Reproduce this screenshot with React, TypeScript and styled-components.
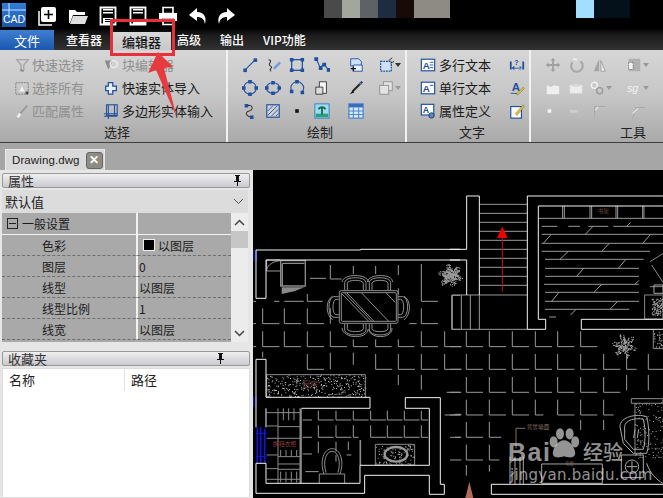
import React, { useMemo } from "react";
import styled, { createGlobalStyle } from "styled-components";

const Global = createGlobalStyle`
  html, body { margin: 0; padding: 0; background: #000; }
  body { font-family: "Noto Sans CJK SC", "Liberation Sans", sans-serif; }
`;

const Page = styled.div`
  position: relative; width: 663px; height: 498px; overflow: hidden;
  display: flex; flex-direction: column; background: #a8a8a8;
`;
const TopBar = styled.div`
  height: 29px; flex: none; background: #000; display: flex; align-items: flex-start; position: relative;
`;
const Logo = styled.div`
  width: 24px; height: 24px; margin: 3px 0 0 2px; flex: none; position: relative;
  background: linear-gradient(#2f7fd8, #1c55ae); color: #fff; font: 10.5px/1 "Liberation Sans", sans-serif;
  display: flex; align-items: flex-end; justify-content: center; padding-bottom: 3px; box-sizing: border-box;
`;
const LogoGrid = styled.svg`position: absolute; left: 0; top: 0; width: 24px; height: 24px;`;
const QuickIcons = styled.div`
  display: flex; margin-left: 12px; height: 29px; align-items: center; flex: none; padding-top: 2px; box-sizing: border-box;
`;
const QuickBtn = styled.svg`
  width: 20px; height: 20px; flex: none; margin-right: ${p => p.$mr ?? 10}px;
`;
const Mosaic = styled.div`
  position: absolute; top: 0; height: 18px; left: ${p => p.$x}px; width: ${p => p.$w}px; background: ${p => p.$c};
`;
const MenuBar = styled.div`
  height: 21px; flex: none; display: flex; align-items: stretch;
  background: linear-gradient(#040404, #1c1c1c 30%, #323232);
`;
const FileTab = styled.div`
  width: 54px; background: linear-gradient(#3f7fd2, #1b57ad); color: #fff; font-size: 13px;
  display: flex; align-items: center; justify-content: center; margin-top: 1px;
`;
const Tab = styled.div`
  color: ${p => (p.$active ? "#1a1a1a" : "#fff")}; font-size: ${p => (p.$active ? 13 : 12)}px;
  margin-left: ${p => p.$ml}px; padding: 0 ${p => (p.$active ? 10 : 0)}px;
  display: flex; align-items: center; white-space: nowrap;
  background: ${p => (p.$active ? "linear-gradient(#d8d8d8, #c8c8c8)" : "transparent")};
  margin-top: ${p => (p.$active ? 3 : 0)}px; font-weight: 500;
`;
const Ribbon = styled.div`
  height: 93px; flex: none; display: flex; box-sizing: border-box;
  background: linear-gradient(#d6d6d6, #c6c6c6 50%, #a9a9a9);
  border-bottom: 1px solid #3c3c3c;
`;
const Group = styled.div`
  width: ${p => p.$w}px; flex: none; display: flex; flex-direction: column; box-sizing: border-box;
  border-right: ${p => (p.$last ? "none" : "2px solid #f2f2f2")};
`;
const Rows = styled.div`
  display: grid; height: 72px; box-sizing: border-box; padding: 3px 0 0 ${p => p.$pl || 0}px; grid-auto-rows: 23px; flex: none;
  grid-template-columns: ${p => p.$cols};
  align-items: center;
`;
const GroupLabel = styled.div`
  font-size: 13px; color: #222; text-align: center; line-height: 17px; padding-left: ${p => p.$pl || 0}px; margin-top: 1px;
`;
const Cmd = styled.div`
  display: flex; align-items: center; font-size: 13px; white-space: nowrap;
  color: ${p => (p.$off ? "#8f8f8f" : "#1a1a1a")};
  padding-left: ${p => p.$pl || 0}px;
`;
const Ico = styled.svg`
  width: 16px; height: 16px; flex: none; display: block; justify-self: center;
  margin-right: ${p => p.$mr || 0}px;
`;
const DocBar = styled.div`
  height: 27px; flex: none; background: #a6a6a6; display: flex; align-items: flex-end; padding-left: 5px;
`;
const DocTab = styled.div`
  width: 100px; height: 21px; box-sizing: border-box; background: #d9d9d9;
  border: 1px solid #e8e8e8; border-bottom: none; display: flex; align-items: center; padding: 0 1px 0 6px;
  font: 11.5px "Liberation Sans", sans-serif; letter-spacing: .1px; color: #222; justify-content: space-between; white-space: nowrap;
`;
const CloseBtn = styled.div`
  width: 17px; height: 17px; background: #8d8d84; border: 1px solid #666; border-radius: 3px; box-sizing: border-box;
  color: #fff; font: bold 12px/15px "Liberation Sans", sans-serif; text-align: center; flex: none;
`;
const Main = styled.div`flex: 1; display: flex; min-height: 0;`;
const Panel = styled.div`
  width: 253px; flex: none; background: #e6e6e6; padding: 3px 3px 0 2px; box-sizing: border-box;
  display: flex; flex-direction: column;
`;
const PanelHead = styled.div`
  height: 15px; flex: none; display: flex; justify-content: space-between; align-items: center; box-sizing: border-box;
  background: linear-gradient(#f0f0f0, #c9c9d0); border: 1px solid #999; border-radius: 2px;
  font-size: 13px; color: #333; padding: 0 7px 0 5px;
`;
const Pin = styled.svg`width: 9px; height: 11px; flex: none;`;
const Select = styled.div`
  height: 23px; flex: none; margin-top: 2px; width: 246px; background: #dcdcdc; display: flex; align-items: center; justify-content: space-between;
  font-size: 13px; color: #222; padding: 0 4px 0 3px; box-sizing: border-box;
`;
const SelectArrow = styled.svg`width: 11px; height: 7px; flex: none;`;
const GridWrap = styled.div`height: 129px; width: 246px; flex: none; display: flex;`;
const PropGrid = styled.div`flex: 1; background: #a9a9a9; display: flex; flex-direction: column;`;
const PropRow = styled.div`
  height: ${p => (p.$head ? 22 : 21)}px; display: grid; grid-template-columns: 136px 1fr; flex: none; box-sizing: border-box;
  border-bottom: ${p => (p.$head ? "1px solid #f2f2f2" : "1px dashed #6e6e6e")};
  font-size: 12px; color: #1c1c1c; align-items: center;
`;
const PropName = styled.div`
  height: 100%; display: flex; align-items: center; padding-left: ${p => (p.$head ? 5 : 40)}px; gap: 4px;
  border-right: 2px solid #f2f2f2; white-space: nowrap;
`;
const PropValue = styled.div`display: flex; align-items: center; padding-left: ${p => p.$pl || 1}px; gap: 3px; white-space: nowrap;`;
const Expander = styled.div`
  width: 11px; height: 11px; box-sizing: border-box; border: 1px solid #222; display: flex; align-items: center; justify-content: center;
  &::before { content: ""; width: 7px; height: 1px; background: #222; }
`;
const Swatch = styled.div`width: 10px; height: 10px; background: #000; border: 1px solid #eee;`;
const Scroll = styled.div`width: 17px; flex: none; background: #ececec; display: flex; flex-direction: column; align-items: stretch; justify-content: space-between; padding: 2px 0 1px; box-sizing: border-box;`;
const Thumb = styled.div`height: 17px; background: #c6c6c6;`;
const Chevron = styled.svg`width: 17px; height: 16px; display: block; flex: none;`;
const FavHead = styled(PanelHead)`margin-top: 9px; padding-right: 24px;`;
const FavList = styled.div`
  flex: 1; background: #fff; margin-top: 2px; border: 1px solid #ddd; display: flex; flex-direction: column;
`;
const FavCols = styled.div`
  display: grid; grid-template-columns: 122px 1fr; font-size: 13px; color: #222; height: 22px; align-items: center;
`;
const FavCol = styled.div`
  padding-left: ${p => p.$pl}px; border-right: ${p => (p.$line ? "1px solid #e2e2e2" : "none")}; line-height: 22px;
`;
const Canvas = styled.div`flex: 1; background: #000; position: relative; min-width: 0;`;
const Drawing = styled.svg`display: block; width: 410px; height: 328px;`;
const Highlight = styled.div`
  position: absolute; left: 110px; top: 19px; width: 65px; height: 37px; box-sizing: border-box; border: 3.500px solid #e8303a;
`;
const ArrowOverlay = styled.svg`position: absolute; left: 140px; top: 40px; width: 50px; height: 90px;`;
const Mark = styled.div`
  position: absolute; left: 507px; top: 425px; width: 125px; height: 58px; color: rgba(232,232,232,.64);
  font-family: "Liberation Sans", sans-serif;
`;
const MarkBai = styled.div`position: absolute; left: 1px; top: 12px; font: bold 25px/30px "Liberation Sans", sans-serif; letter-spacing: 1.5px;`;
const MarkJing = styled.div`position: absolute; left: 76px; top: 14px; font: 500 20px/26px "Noto Sans CJK SC", sans-serif;`;
const MarkUrl = styled.div`position: absolute; left: 3px; top: 43px; font: 15px/14px "DejaVu Sans", sans-serif; letter-spacing: .25px; white-space: nowrap;`;
const Paw = styled.svg`position: absolute; left: 41px; top: 2px; width: 32px; height: 36px;`;

const B = "#1f4f9f";
const G = "#9a9a9a";
const W = "#f0f0f0";

const icons: Record<string, React.ReactNode> = {
  filter: <g fill="none" stroke={W} strokeWidth="1.5"><path d="M3 3h13l-5 6v6l-3 1V9z" stroke="#a5a5a5" /><path d="M7 14l4 2" stroke="#888" /></g>,
  selAll: <g fill="none"><rect x="2" y="3" width="14" height="13" stroke="#777" strokeDasharray="2 1" /><path d="M6 13l3-6 3 6z" fill="#f2f2f2" /><rect x="13" y="13" width="3" height="3" fill="#444" /></g>,
  brushOff: <g fill="none" stroke="#999" strokeWidth="2"><path d="M15 3L7 12" /><path d="M7 12l-3 4" stroke="#eee" strokeWidth="3" /></g>,
  blockEdit: <g fill="none"><path d="M2 4h8l-1 5-3 5-2-5z" fill="#8a8a8a" /><circle cx="12" cy="8" r="4" stroke="#f0f0f0" strokeWidth="1.5" /></g>,
  plus: <path d="M6 3h5v4h4v5h-4v4H6v-4H3V7h3z" fill="#e8eef8" stroke={B} strokeWidth="1.4" />,
  polyInput: <g fill="none" stroke={B} strokeWidth="1.2"><rect x="4" y="2" width="12" height="12" /><path d="M1 12h15M1 15h15M6 2v16M13 2v13" /></g>,
  line: <g><path d="M3 15L15 3" stroke={B} strokeWidth="1.2" /><rect x="1.500" y="13" width="4" height="4" fill={B} /><rect x="13" y="1.500" width="4" height="4" fill={B} /></g>,
  spline: <g fill="none"><path d="M4 3c6 1-2 5 2 7s-3 4 1 6" stroke="#333" strokeWidth="1.2" /><path d="M9 12l7-7 2 2-7 7z" fill="#6f9be0" /></g>,
  rect: <g><rect x="3" y="3" width="12" height="12" fill="none" stroke={B} strokeWidth="1.4" /><path d="M1 1h4v4H1zM13 1h4v4h-4zM1 13h4v4H1zM13 13h4v4h-4z" fill={B} /></g>,
  poly: <g fill="none" stroke={B} strokeWidth="1.2"><path d="M3 3l4 9 4-4 5 6" /><path d="M1 1h3v3H1zM6 11h3v3H6zM10 7h3v3h-3zM15 13h3v3h-3z" fill={B} /></g>,
  circle: <g><circle cx="9" cy="9" r="7" fill="none" stroke={B} strokeWidth="1.2" /><path d="M7 0h4v4H7zM7 14h4v4H7zM0 7h4v4H0zM14 7h4v4h-4z" fill={B} /></g>,
  ellipse: <g><ellipse cx="9" cy="9" rx="7.500" ry="6" fill="none" stroke={B} strokeWidth="1.2" /><path d="M7 1h4v4H7zM7 13h4v4H7zM0 7h4v4H0zM14 7h4v4h-4z" fill={B} /></g>,
  arc: <g><path d="M3 12A7 7 0 1 1 15 13" fill="none" stroke={B} strokeWidth="1.2" /><path d="M1 11h4v4H1zM13 12h4v4h-4zM7 0h4v4H7z" fill={B} /></g>,
  curve: <g fill="none"><path d="M5 3c8-2 8 5 3 6s-4 6 3 7" stroke="#333" strokeWidth="1.2" /><path d="M3 1h4v4H3zM9 14h4v4H9z" fill={B} /></g>,
  hatch: <g><rect x="2" y="2" width="14" height="14" fill="#c9d3e2" stroke={B} strokeWidth="1.3" /><path d="M3 9l6-6M3 14L14 3M7 15l8-8M12 15l3-3" stroke="#445" /></g>,
  point: <rect x="7" y="7" width="4" height="4" fill="#111" />,
  image: <g><rect x="1" y="1" width="16" height="16" fill="#9fdcf0" stroke="#2a7bbd" /><rect x="2" y="12" width="14" height="4" fill="#2e9e7c" /><path d="M9 5v8M5 7c2-3 6-3 8 0" stroke="#116a4e" strokeWidth="2" fill="none" /></g>,
  docLink: <g fill="none" stroke="#333" strokeWidth="1"><path d="M6 2h8v13H6z" fill="#f6f6f6" /><path d="M2 8h8v8H2z" fill="#ddd" /></g>,
  blocks: <g fill="none"><path d="M3 2h9l3 3v5H3z" fill="#cfe0f6" stroke={B} /><path d="M6 9h10v7H6z" fill="#e8eef8" stroke={B} /><path d="M3 13h6M6 11v5" stroke="#111" strokeWidth="1.4" /></g>,
  brushBlack: <g><path d="M16 2L5 13" stroke="#222" strokeWidth="2.2" /><path d="M2 16l3-4 2 2z" fill="#111" /><circle cx="14" cy="4" r="1.5" fill="#3d75cf" /></g>,
  table: <g><rect x="1" y="1" width="16" height="16" fill="#d6e8fb" stroke="#3a7bd0" strokeWidth="1.2" /><rect x="1" y="1" width="16" height="4" fill="#3a6fc0" /><path d="M1 9h16M1 13h16M6 5v12M12 5v12" stroke="#3a7bd0" /></g>,
  dashedBox: <g fill="none"><rect x="3" y="5" width="12" height="11" fill="#cfe0f6" stroke={B} strokeDasharray="2 1" strokeWidth="1.4" /><path d="M12 4l4-3M14 7l4-2" stroke="#223" /></g>,
  grayCopy: <g fill="#e4e4e4" stroke="#8d8d8d"><rect x="6" y="2" width="10" height="10" /><rect x="2" y="6" width="10" height="10" /></g>,
  textA: <g><rect x="1.500" y="2.500" width="15" height="13" fill="#fff" stroke={B} strokeWidth="1.3" /><text x="3" y="13" fontSize="11" fontWeight="700" fontFamily="Liberation Sans" fill={B}>A</text><path d="M11 6h4M11 9h4M11 12h4" stroke={B} /></g>,
  textB: <g><rect x="1.500" y="2.500" width="15" height="13" fill="#fff" stroke={B} strokeWidth="1.3" /><text x="3" y="13" fontSize="11" fontWeight="700" fontFamily="Liberation Sans" fill={B}>A</text><path d="M11 6h4" stroke={B} /></g>,
  attr: <g><rect x="1.500" y="1.500" width="14" height="12" fill="#fff" stroke={B} strokeWidth="1.3" /><text x="3" y="11" fontSize="10" fontWeight="700" fontFamily="Liberation Sans" fill={B}>A</text><circle cx="13" cy="14" r="3" fill="#5a86cc" stroke="#234" /></g>,
  dim: <g fill={B}><path d="M1 5h2v9H1zM15 5h2v9h-2z" /><path d="M3 12h12v1H3zM3 12l3-2v5zM15 12l-3-2v5z" /><text x="6" y="9" fontSize="8" fontWeight="700" fontFamily="Liberation Sans">?</text></g>,
  textPen: <g><text x="3" y="12" fontSize="13" fontWeight="700" fontFamily="Liberation Sans" fill={B}>A</text><path d="M8 16l8-8 1 2-7 7z" fill="#e6c92a" stroke="#555" strokeWidth=".5" /><path d="M2 15h7" stroke={B} /></g>,
  notePen: <g><rect x="2" y="4" width="12" height="13" fill="#fff" stroke={B} strokeWidth="1.3" /><path d="M7 12l9-10 1 2-8 10z" fill="#e6c92a" stroke="#555" strokeWidth=".5" /></g>,
  move: <g fill="#a0a0a0"><path d="M9 1l3 3h-2v4h4V6l3 3-3 3v-2h-4v4h2l-3 3-3-3h2v-4H4v2L1 9l3-3v2h4V4H6z" /></g>,
  rotate: <g fill="none" stroke="#a8a8a8" strokeWidth="2.400"><path d="M14 5a6.500 6.500 0 1 1-9 1" /><path d="M6 2l4 1" stroke="#eee" /></g>,
  mirror: <g><path d="M8 2v14L2 16z" fill="#a4a4a4" /><path d="M10 4v12l5 0z" fill="#eaeaea" stroke="#999" /></g>,
  arrayBox: <g><rect x="3" y="2" width="13" height="14" fill="#b0b0b0" /><path d="M3 6h5v8H3z" fill="#f4f4f4" stroke="#555" strokeDasharray="1 1" /></g>,
  w1: <g><path d="M2 6l5 2 3-2 6 1v9H2z" fill="#efefef" /></g>,
  w2: <g><path d="M2 5h14v10H2z" fill="#ececec" /><path d="M2 5l7 2 7-2" stroke="#c6c6c6" fill="none" /></g>,
  chain: <g fill="none" stroke="#f2f2f2" strokeWidth="1.6"><circle cx="6" cy="6" r="3.400" /><circle cx="12" cy="12" r="3.400" stroke="#9a9a9a" /></g>,
  scale: <text x="1" y="14" fontSize="12" fontStyle="italic" fontFamily="Liberation Sans" fill="#f2f2f2">sg</text>,
  dots: <g fill="#f5f5f5"><rect x="3" y="7" width="4" height="4" /><rect x="11" y="7" width="4" height="4" fill="#bbb" /></g>,
  trim: <g><path d="M2 8h9v3H2z" fill="#cfcfcf" /><path d="M13 2h2v15h-2z" fill="#bdbdbd" /></g>,
  corner: <g fill="none" stroke="#a9a9a9" strokeWidth="1.2"><path d="M3 16V4h12" /><path d="M7 4L4 8" stroke="#eee" /></g>,
  chamfer: <g fill="none" stroke="#a9a9a9" strokeWidth="1.2"><path d="M4 17L8 5h10" /><path d="M4 12l6-6" stroke="#eee" /></g>,
};

const Icon = ({ n, mr }: { n: string; mr?: number }) => <Ico viewBox="0 0 18 18" $mr={mr}>{icons[n]}</Ico>;
const Caret = styled.span`
  display: inline-block; width: 0; height: 0; border: 3px solid transparent; border-top: 4px solid ${p => p.$c || "#333"}; border-bottom: none; margin-left: 1px; flex: none;
`;
const IconDrop = styled.div`display: flex; align-items: center; justify-content: center;`;

function pr(seed: number) {
  let s = seed;
  return () => {
    s = (s * 16807) % 2147483647;
    return s / 2147483647;
  };
}
function speckle(x0: number, y0: number, w: number, h: number, n: number, seed: number) {
  const r = pr(seed);
  let d = "";
  for (let i = 0; i < n; i++) {
    d += `M${(x0 + r() * w).toFixed(0)} ${(y0 + r() * h).toFixed(0)}h3v3h-3z`;
  }
  return d;
}
function blob(cx: number, cy: number, rad: number, n: number, seed: number) {
  const r = pr(seed);
  let d = "";
  for (let i = 0; i < n; i++) {
    const a = r() * 6.283;
    const q = Math.sqrt(r()) * rad * (0.72 + 0.28 * Math.sin(a * 6));
    d += `M${(cx + Math.cos(a) * q).toFixed(0)} ${(cy + Math.sin(a) * q).toFixed(0)}h3v3h-3z`;
  }
  return d;
}
const L = (list: [number, number, number?, number?][]) =>
  list.map(([x, y, h = 46, w = 50]) => `M${x} ${y - h}V${y}H${x + w}`).join("");

const Chair = ({ d }: { d: string }) => (
  <g fill="none" stroke="#8e8e8e" strokeWidth="3">
    <path d={d} />
  </g>
);

function Plan() {
  const spk = useMemo(
    () => ({
      counter: speckle(50, 615, 296, 66, 340, 77),
      plant1: blob(600, 316, 38, 260, 11),
      basin: speckle(378, 825, 115, 60, 110, 31),
      plantB: blob(522, 527, 38, 260, 19),
      plantC: blob(5, 316, 34, 180, 23),
      sofa: speckle(555, 695, 84, 170, 130, 41),
      nook: speckle(612, 482, 27, 52, 36, 47),
      cup: speckle(605, 385, 34, 50, 130, 61),
    }),
    []
  );
  return (
    <Drawing viewBox="0 0 410 328">
      <g transform="translate(-3 0) scale(.3333)" fill="none" strokeWidth="3">
        <path stroke={G} d={L([[241, 327, 42, 34], [514, 394, 112, 50], [172, 394, 22, 46], [38, 461], [103, 461, 46], [172, 461, 46], [241, 461, 46, 0], [514, 461, 46, 50], [38, 530], [103, 530], [172, 530], [241, 530], [310, 530, 22, 44], [377, 530, 22, 48], [445, 530, 22, 48], [514, 530], [584, 530], [172, 598], [377, 598], [445, 598], [514, 598], [584, 598]])} />
        <path stroke={G} d="M180 325h48M310 288v24M377 288v24M445 285v30M445 355v18M72 394h16M103 394h58M10 394h8M10 461h8M10 530h8M478 461h22M38 545v18M241 548v50M310 548v36M445 615v30M514 615v44M590 667h40M584 735h46M615 802h15" />
        <path stroke={G} d="M605 376h25M605 376v102M605 478h25" />
        <path stroke={G} d="M50 303V270H90M50 303H90M50 298c5-15 20-24 40-26" />
        <path stroke="#8a8a8a" strokeWidth="4" d="M92 272h74v76H92zM97 280h66M97 280v66" />
        <path fill="#8a8a8a" stroke="none" d="M95 352h68l-30 12-38 8z" />
        <g stroke="#8e8e8e">
          <rect x="268" y="362" width="176" height="98" rx="6" />
          <rect x="274" y="368" width="165" height="86" rx="3" />
          <path d="M274 370l82 84M283 368l82 86M290 368l82 86M334 368l82 86M408 368l28 30" />
        </g>
        <Chair d="M284 360v-22c0-20 64-20 64 0v22M276 336c4-26 76-26 80 0M292 360v-20c0-12 48-12 48 0v20" />
        <Chair d="M358 360v-22c0-20 64-20 64 0v22M352 336c4-26 76-26 76 0M366 360v-20c0-12 48-12 48 0v20" />
        <Chair d="M284 462v18c0 20 64 20 64 0v-18M276 474c4 34 76 34 78 4M292 462v14c0 12 48 12 48 0v-14" />
        <Chair d="M358 462v18c0 20 64 20 64 0v-18M356 478c4 30 72 30 70-4M366 462v14c0 12 48 12 48 0v-14" />
        <Chair d="M266 380h-14c-20 0-20 62 0 62h14M266 388h-8c-12 0-12 46 0 46h8M248 378c-22 14-22 54 0 72" />
        <Chair d="M444 380h14c20 0 20 62 0 62h-14M444 388h8c12 0 12 46 0 46h-8M462 378c22 14 22 54 0 72" />
        <path fill="#999" stroke="none" d={spk.plant1} />
        <path stroke="#8c8c8c" d="M50 614h296v68M50 614v68" />
        <path fill="#a8a8a8" stroke="none" d={spk.counter} />
        <text x="157" y="652" fontSize="24" fontFamily="Noto Sans CJK SC" fill="#6a3a34" stroke="none">厨房</text>
        <path stroke={G} d={L([[205, 750, 28, 46], [258, 750, 28, 46], [310, 750, 28, 46], [362, 750, 28, 46], [412, 750, 28, 46], [463, 750, 28, 46], [514, 750, 28, 20], [205, 802, 36, 46], [258, 802, 36, 46], [310, 802, 36, 16], [362, 802, 36, 46], [412, 802, 36, 46], [463, 802, 36, 46], [514, 802, 36, 20]])} />
        <path stroke={G} d="M158 750h28M158 802h28M158 852h28M205 815v34M258 815v30M295 815v25M290 855h14M258 855v20M206 905h-40" />
        <path stroke="#8c8c8c" d="M50 728h100M50 768h34M50 805h34M50 855h34M50 896h34M50 928h100M84 715v225M100 715v36M116 715v36M132 715v36M92 840v18M108 840v18M124 840v18M140 840v18M92 905v32M108 905v32M124 905v32M140 905v32M84 770h66M84 805h66M84 860h66M84 882h66M84 898h66" />
        <path stroke="#8c8c8c" strokeWidth="7" d="M152 715v225" />
        <text x="68" y="827" fontSize="18" fontFamily="Noto Sans CJK SC" fill="#8a3a34" stroke="none">换鞋衣柜</text>
        <path stroke="#8c8c8c" d="M208 940v-28h76v28M222 912c-14-40 0-76 24-76s38 36 24 76M228 908c-10-34 0-64 18-64s28 30 18 64" />
        <path stroke="#8c8c8c" strokeWidth="5" d="M331 810v76" />
        <path stroke="#8c8c8c" d="M376 823h118v62h-118z" />
        <path fill="#9c9c9c" stroke="none" d={spk.basin} />
        <ellipse cx="438" cy="853" rx="34" ry="22" stroke="#9a9a9a" strokeWidth="7" />
        <path stroke="#0d1ac8" strokeWidth="3" d="M12 240v34M20 240v34M10 680v30M18 680v30" />
        <path stroke="#1414d8" strokeWidth="5" d="M22 772v108M32 772v108M44 776v104" />
        <path stroke="#1414d8" strokeWidth="3" d="M18 790h32M18 860h32" />
        <path stroke="#f4f4f4" d="M18 240H332V238H630M48 270H630M48 270V385H18V240M18 568H48V682H360V715H155M18 568V772M48 715V772M18 880V970H344V916H538V973H583V943H571V683H466V715H538V886H330V940H48V880H18" />
      </g>
      <g transform="translate(197 0) scale(.3333)" fill="none" strokeWidth="3">
        <path stroke={G} d="M88 103H232M88 130H232M88 157H232M88 184H232M88 211H232M88 238H232M88 265H232M88 292H232M88 319H232M88 346H232M7 375H232M7 375V478H232M34 375V478M61 375V478M88 375V478" />
        <path stroke={G} d="M265 145H639M338 108v37M343 108v37M420 108v37M425 108v37M498 108v37M503 108v37M578 108v37M582 108v37" />
        <path stroke={G} d="M275 169h47M355 169h35M415 169h60M490 169h149M275 193h364M275 220h364M275 244h325M285 268h296M285 295h282M285 319h282M282 343h284M285 367h282M285 394h282M285 418h253M298 441h20M406 193l23-24M280 220l24-27M578 220l24-27M455 244l23-24M330 268l25-24M505 295l23-27M380 319l21-24M555 343l12-12M432 367l23-24M305 394l22-27M480 418l23-24M362 435l16-17M530 169l12-12" />
        <path stroke="#8a8a8a" d="M600 275l40-25M605 285l34 52M600 350h39M584 375h55v72h-55z" />
        <path fill="#999" stroke="none" d={spk.cup} />
        <path stroke="#a8a8a8" d="M612 345h27v25h-27z" />
        <path fill="#999" stroke="none" d={spk.plantC} />
        <path fill="#999" stroke="none" d={spk.plantB} />
        <path fill="#999" stroke="none" d={spk.nook} />
        <path stroke="#8a8a8a" d="M610 478v58h29" />
        <text x="443" y="130" fontSize="17" fontFamily="Noto Sans CJK SC" fill="#6e4a44" stroke="none">书架</text>
        <path stroke="#cc1111" d="M157 200V365" />
        <path fill="#ee0000" stroke="none" d="M157 170l16 34h-32z" />
        <path stroke={G} d={L([[49, 530], [118, 530], [187, 530], [256, 530], [323, 530], [392, 530], [49, 598], [118, 598], [187, 598], [256, 598], [323, 598], [392, 598], [461, 598, 46, 50], [530, 598, 46, 30], [595, 598, 46, 44], [49, 667], [118, 667], [187, 667], [256, 667], [323, 667], [392, 667], [461, 667], [49, 735], [118, 735], [187, 735], [256, 735, 46, 24], [323, 735], [392, 735], [461, 735, 46, 30], [49, 802, 46, 50], [118, 802, 46, 36], [49, 870, 46, 50], [118, 870, 46, 30]])} />
        <path stroke={G} d="M0 530h34M0 598h34M0 667h34M0 735h34M0 802h34M0 870h34M49 885v32M118 885v20M392 750v30M461 750v30M530 615v46M595 615v46M14 733h20" />
        <path stroke="#8c8c8c" d="M544 686h95v14h-95zM555 700v150" />
        <path fill="#999" stroke="none" d={spk.sofa} />
        <path stroke="#a8a8a8" d="M510 770c0-30 50-40 80-30 8 30 10 80 0 110h-40l-30-30z" />
        <path stroke="#a8a8a8" d="M524 770c0-20 36-28 56-22 6 24 8 60 0 90h-30l-26-30zM555 778l-4 26M566 778l-4 26" />
        <path stroke="#a8a8a8" d="M514 855h66v68h-66zM526 890a20 20 0 1 0 40 0a20 20 0 1 0-40 0M530 890h32M546 874v32" />
        <path stroke="#a8a8a8" d="M590 880c10 30 30 50 49 60" />
        <path stroke="#8a6b62" d="M198 775v60M198 775h28" />
        <text x="230" y="776" fontSize="17" fontFamily="Noto Sans CJK SC" fill="#8a6b62" stroke="none">背景墙面</text>
        <path stroke="#a8a8a8" d="M275 882h182v58H275zM180 860v82M195 860v82M210 860v82M220 860v82M180 880l14-14M180 920l14-14" />
        <text x="345" y="886" fontSize="13" fontFamily="Noto Sans CJK SC" fill="#8a6b62" stroke="none">电视</text>
        <path fill="#b06a5a" stroke="none" d="M58 935l12 49H46z" />
        <path stroke="#f4f4f4" d="M0 238H50V78H88V375M0 270H50V375M232 78H639M232 78V478H287V448H265V108H639M394 478V448H639M394 478H639M124 943H639M124 973H639M124 943V973" />
      </g>
    </Drawing>
  );
}

const PinIcon = () => (
  <Pin viewBox="0 0 9 11"><path d="M2 0h5v1H6v5h2v1H5v4H4V7H1V6h2V1H2z" fill="#111" /></Pin>
);

export default function App() {
  return (
    <Page>
      <Global />
      <TopBar>
        <Logo>
          CAD
          <LogoGrid viewBox="0 0 24 24">
            <path d="M0 7h24M7 0v15" stroke="#cfe4ff" strokeWidth="1" fill="none" />
          </LogoGrid>
        </Logo>
        <QuickIcons>
          <QuickBtn viewBox="0 0 20 20" fill="none">
            <path d="M1 5v14h13" stroke="#fff" strokeWidth="1.5" />
            <rect x="3" y="1" width="15" height="15" rx="2" fill="#fff" />
            <path d="M10.500 4v9M6 8.500h9" stroke="#000" strokeWidth="1.600" />
          </QuickBtn>
          <QuickBtn viewBox="0 0 20 20">
            <path d="M1 4h6l2 2h8v3H5L2 17H1z" fill="#fff" />
            <path d="M5 10h15l-3 8H2z" fill="#ddd" />
          </QuickBtn>
          <QuickBtn viewBox="0 0 20 20">
            <path d="M2.500 1.500h15v17h-15z" fill="none" stroke="#fff" strokeWidth="1.800" />
            <path d="M5 3h10v1.500H5zM5 6h10v1.500H5z" fill="#fff" /><path d="M5 12h10v6H5z" fill="#fff" /><path d="M7 13.500h6M7 15.500h6" stroke="#000" />
          </QuickBtn>
          <QuickBtn viewBox="0 0 20 20">
            <path d="M2.500 1.500h15v17h-15z" fill="none" stroke="#fff" strokeWidth="1.800" />
            <path d="M5 3h10v1.500H5zM5 6h10v1.500H5z" fill="#fff" /><path d="M5 13h13v6H5z" fill="#fff" />
          </QuickBtn>
          <QuickBtn viewBox="0 0 20 20">
            <path d="M5 1.500h10v6H5z" fill="none" stroke="#fff" strokeWidth="1.600" />
            <path d="M1 7h18v8h-3v-3H4v3H1z" fill="#fff" /><path d="M5 13h10v5.500H5z" fill="none" stroke="#fff" strokeWidth="1.600" />
          </QuickBtn>
          <QuickBtn viewBox="0 0 20 20" $mr={8}>
            <path d="M9 2L1 9l8 6v-4c5 0 7 2 8 7 2-7-1-12-8-12z" fill="#fff" />
          </QuickBtn>
          <QuickBtn viewBox="0 0 20 20">
            <path d="M11 2l8 7-8 6v-4c-5 0-7 2-8 7-2-7 1-12 8-12z" fill="#fff" />
          </QuickBtn>
        </QuickIcons>
        <Mosaic $x={324} $w={18} $c="#4a4a4a" />
        <Mosaic $x={342} $w={18} $c="#a3a69d" />
        <Mosaic $x={360} $w={18} $c="#5e6264" />
        <Mosaic $x={378} $w={18} $c="#1d2c40" />
        <Mosaic $x={396} $w={18} $c="#180a06" />
        <Mosaic $x={414} $w={36} $c="#8e8a84" />
        <Mosaic $x={576} $w={18} $c="#a2dfff" />
        <Mosaic $x={594} $w={36} $c="#04101a" />
      </TopBar>
      <MenuBar>
        <FileTab>文件</FileTab>
        <Tab $ml={12}>查看器</Tab>
        <Tab $ml={10} $active>编辑器</Tab>
        <Tab $ml={6}>高级</Tab>
        <Tab $ml={19}>输出</Tab>
        <Tab $ml={19}>VIP功能</Tab>
      </MenuBar>
      <Ribbon>
        <Group $w={228}>
          <Rows $cols="103px 123px">
            <Cmd $off $pl={14}><Icon n="filter" mr={2} />快速选择</Cmd>
            <Cmd $off><Icon n="blockEdit" mr={3} />块编辑器</Cmd>
            <Cmd $off $pl={14}><Icon n="selAll" mr={2} />选择所有</Cmd>
            <Cmd><Icon n="plus" mr={3} />快速实体导入</Cmd>
            <Cmd $off $pl={14}><Icon n="brushOff" mr={2} />匹配属性</Cmd>
            <Cmd><Icon n="polyInput" mr={3} />多边形实体输入</Cmd>
          </Rows>
          <GroupLabel $pl={8}>选择</GroupLabel>
        </Group>
        <Group $w={179}>
          <Rows $pl={10} $cols="23px 24px 23px 28px 40px 26px">
            <Icon n="line" /><Icon n="spline" /><Icon n="rect" /><Icon n="poly" /><Icon n="blocks" />
            <IconDrop><Icon n="dashedBox" /><Caret /></IconDrop>
            <Icon n="circle" /><Icon n="ellipse" /><Icon n="arc" /><Icon n="docLink" /><Icon n="brushBlack" />
            <IconDrop><Icon n="grayCopy" /><Caret $c="#999" /></IconDrop>
            <Icon n="curve" /><Icon n="hatch" /><Icon n="point" /><Icon n="image" /><Icon n="table" />
          </Rows>
          <GroupLabel $pl={7}>绘制</GroupLabel>
        </Group>
        <Group $w={124}>
          <Rows $cols="100px 20px">
            <Cmd $pl={13}><Icon n="textA" mr={3} />多行文本</Cmd><Icon n="dim" />
            <Cmd $pl={13}><Icon n="textB" mr={3} />单行文本</Cmd><Icon n="textPen" />
            <Cmd $pl={13}><Icon n="attr" mr={3} />属性定义</Cmd><Icon n="notePen" />
          </Rows>
          <GroupLabel $pl={8}>文字</GroupLabel>
        </Group>
        <Group $w={132} $last>
          <Rows $pl={10} $cols="23px 24px 24px 50px">
            <Icon n="move" /><Icon n="rotate" /><Icon n="mirror" /><IconDrop><Icon n="arrayBox" /><Caret $c="#999" /></IconDrop>
            <Icon n="w1" /><Icon n="w2" /><IconDrop><Icon n="chain" /><Caret $c="#999" /></IconDrop><IconDrop><Icon n="scale" /><Caret $c="#999" /></IconDrop>
            <Icon n="dots" /><Icon n="trim" /><Icon n="corner" /><Icon n="chamfer" />
          </Rows>
          <GroupLabel $pl={72}>工具</GroupLabel>
        </Group>
      </Ribbon>
      <DocBar>
        <DocTab>Drawing.dwg<CloseBtn>✕</CloseBtn></DocTab>
      </DocBar>
      <Main>
        <Panel>
          <PanelHead>属性<PinIcon /></PanelHead>
          <Select>
            默认值
            <SelectArrow viewBox="0 0 11 7"><path d="M1 1l4.500 4.500L10 1" fill="none" stroke="#555" /></SelectArrow>
          </Select>
          <GridWrap>
            <PropGrid>
              <PropRow $head><PropName $head><Expander />一般设置</PropName><PropValue /></PropRow>
              <PropRow><PropName>色彩</PropName><PropValue $pl={5}><Swatch />以图层</PropValue></PropRow>
              <PropRow><PropName>图层</PropName><PropValue>0</PropValue></PropRow>
              <PropRow><PropName>线型</PropName><PropValue>以图层</PropValue></PropRow>
              <PropRow><PropName>线型比例</PropName><PropValue>1</PropValue></PropRow>
              <PropRow><PropName>线宽</PropName><PropValue>以图层</PropValue></PropRow>
            </PropGrid>
            <Scroll>
              <div>
                <Chevron viewBox="0 0 17 16"><path d="M4 10l4.500-4.500L13 10" fill="none" stroke="#444" strokeWidth="1.500" /></Chevron>
                <Thumb />
              </div>
              <Chevron viewBox="0 0 17 16"><path d="M4 6l4.500 4.500L13 6" fill="none" stroke="#444" strokeWidth="1.500" /></Chevron>
            </Scroll>
          </GridWrap>
          <FavHead>收藏夹<PinIcon /></FavHead>
          <FavList>
            <FavCols>
              <FavCol $pl={6} $line>名称</FavCol>
              <FavCol $pl={6}>路径</FavCol>
            </FavCols>
          </FavList>
        </Panel>
        <Canvas><Plan /></Canvas>
      </Main>
      <Highlight />
      <ArrowOverlay viewBox="0 0 50 90">
        <path d="M18 12L8 33l8-3 21 48-13-50 9-1z" fill="#e63a3f" />
      </ArrowOverlay>
      <Mark>
        <Paw viewBox="0 0 40 42" fill="currentColor">
          <ellipse cx="7" cy="17" rx="5" ry="7" /><ellipse cx="15" cy="7" rx="5" ry="7" /><ellipse cx="27" cy="7" rx="5" ry="7" /><ellipse cx="34" cy="17" rx="5" ry="7" />
          <path d="M20 15c7 0 14 9 14 16 0 7-8 6-14 4-6 2-14 3-14-4 0-7 7-16 14-16z" />
        </Paw>
        <MarkBai>Bai</MarkBai>
        <MarkJing>经验</MarkJing>
        <MarkUrl>jingyan.baidu.com</MarkUrl>
      </Mark>
    </Page>
  );
}
